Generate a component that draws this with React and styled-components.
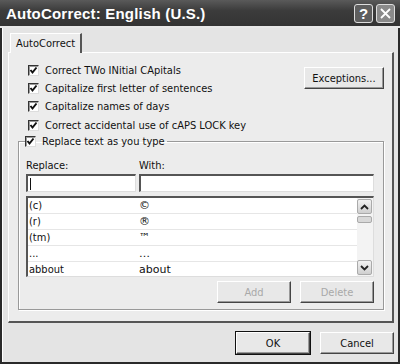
import styled, { createGlobalStyle } from 'styled-components';

const GlobalStyle = createGlobalStyle`
  html, body {
    margin: 0;
    padding: 0;
    background: #e4e4e4;
  }
  body {
    font-family: "DejaVu Sans Condensed", "Liberation Sans", sans-serif;
  }
`;

const Window = styled.div`
  width: 400px;
  height: 364px;
  box-sizing: border-box;
  background: #e4e4e4;
  border: 2px solid #2a2a2a;
  border-top: none;
  display: flex;
  flex-direction: column;
  font-size: 11px;
  color: #111;
`;

const TitleBar = styled.div`
  height: 28px;
  margin: 0 -2px;
  flex-shrink: 0;
  display: flex;
  align-items: center;
  padding: 1px 5px 0 6px;
  background: linear-gradient(#5a5a5a, #3c3c3c 40%, #333 100%);
  border-bottom: 2px solid #e8e8e8;
  box-sizing: border-box;
`;

const Title = styled.div`
  flex: 1;
  color: #fff;
  font-family: "Liberation Sans", Arial, sans-serif;
  font-weight: bold;
  font-size: 15px;
  letter-spacing: 0.2px;
`;

const CaptionButtons = styled.div`
  display: flex;
  gap: 3px;
`;

const CaptionButton = styled.div`
  width: 19px;
  height: 19px;
  box-sizing: border-box;
  border: 1px solid #ddd;
  border-radius: 3px;
  background: ${(p) => (p.$close ? '#8a8a8a' : '#5e5e5e')};
  color: #fff;
  display: flex;
  align-items: center;
  justify-content: center;
  font-family: "Liberation Sans", Arial, sans-serif;
  font-weight: bold;
  font-size: 15px;
`;

const Body = styled.div`
  flex: 1;
  display: flex;
  flex-direction: column;
  padding: 5px 4px 0 5px;
  border-left: 1px solid #fff;
`;

const TabStrip = styled.div`
  display: flex;
  padding-left: 2px;
`;

const Tab = styled.div`
  height: 19px;
  padding: 0 5px;
  display: flex;
  align-items: center;
  background: #ececec;
  border: 1px solid #fff;
  border-right: 2px solid #555;
  border-bottom: none;
  margin-bottom: -1px;
  position: relative;
  z-index: 1;
`;

const Panel = styled.div`
  height: 271px;
  box-sizing: border-box;
  background: #ececec;
  border: 1px solid #fff;
  border-right: 2px solid #555;
  border-bottom: 2px solid #555;
  padding: 8px 8px 11px 9px;
  display: flex;
  flex-direction: column;
`;

const TopArea = styled.div`
  display: grid;
  grid-template-columns: 1fr auto;
  align-items: start;
`;

const Options = styled.div`
  display: flex;
  flex-direction: column;
`;

const CheckRow = styled.label`
  height: 18.3px;
  display: flex;
  align-items: center;
  gap: 6px;
  padding-left: 10px;
  white-space: nowrap;
`;

const Box = styled.span`
  width: 11px;
  height: 11px;
  box-sizing: border-box;
  background: #fff;
  border: 1px solid #333;
  border-right-color: #ddd;
  border-bottom-color: #ddd;
  box-shadow: inset 1px 1px 0 #999;
  display: inline-flex;
  align-items: center;
  justify-content: center;
  flex-shrink: 0;
`;

const Check = () => (
  <Box>
    <svg width="9" height="9" viewBox="0 0 9 9">
      <path d="M1.5 4 L3.5 6.5 L7.5 1.5" fill="none" stroke="#111" strokeWidth="2" />
    </svg>
  </Box>
);

const Button = styled.button`
  width: ${(p) => p.$w || 74}px;
  height: 22px;
  box-sizing: border-box;
  background: #e8e8e8;
  border: 1px solid #fff;
  border-right-color: #444;
  border-bottom-color: #444;
  box-shadow: ${(p) =>
    p.$default
      ? '0 0 0 1px #111, inset -1px -1px 0 #999'
      : 'inset -1px -1px 0 #999'};
  font-family: inherit;
  font-size: 11px;
  color: ${(p) => (p.disabled ? '#a8a8a8' : '#111')};
  padding: 0;
  margin-top: ${(p) => p.$top || 0}px;
`;

const Group = styled.fieldset`
  margin: -2px 0 0 0;
  padding: 0 9px 0 7px;
  border: 1px solid #999;
  box-shadow: 1px 1px 0 #fff, inset 1px 1px 0 #fff;
  flex: 1;
  display: flex;
  flex-direction: column;
  min-width: 0;
`;

const Legend = styled.legend`
  padding: 0 2px 0 0;
  margin-left: -1px;
`;

const LegendRow = styled(CheckRow)`
  padding-left: 0;
`;

const Fields = styled.div`
  display: grid;
  grid-template-columns: 110px 1fr;
  column-gap: 3px;
  margin-top: 9px;
`;

const FieldLabel = styled.div`
  height: 14px;
  margin-bottom: 1px;
`;

const Input = styled.div`
  height: 18px;
  box-sizing: border-box;
  background: #fff;
  border: 2px solid #555;
  border-right: 1px solid #ddd;
  border-bottom: 1px solid #ddd;
  padding: 1px 0 0 2px;
  display: flex;
  align-items: center;
`;

const Caret = styled.span`
  width: 1px;
  height: 12px;
  background: #111;
`;

const List = styled.div`
  margin-top: 4px;
  height: 81px;
  box-sizing: border-box;
  background: #fff;
  border: 2px solid #555;
  border-right: 1px solid #ddd;
  border-bottom: 1px solid #ddd;
  display: flex;
  overflow: hidden;
`;

const Rows = styled.div`
  flex: 1;
  display: flex;
  flex-direction: column;
`;

const Row = styled.div`
  height: 16px;
  flex-shrink: 0;
  box-sizing: border-box;
  border-bottom: 1px solid #e6e6e6;
  display: grid;
  grid-template-columns: 110px 1fr;
  align-items: center;
  padding-left: 1px;
`;

const Symbol = styled.span`
  font-family: "DejaVu Sans", sans-serif;
`;

const ScrollBar = styled.div`
  width: 16px;
  display: flex;
  flex-direction: column;
  background: #f3f3f3;
  padding: 1px 1px 1px 0;
  box-sizing: border-box;
`;

const Arrow = styled.div`
  height: 15px;
  box-sizing: border-box;
  border: 1px solid #aaa;
  border-radius: 2px;
  background: linear-gradient(#f2f2f2, #cfcfcf);
  display: flex;
  align-items: center;
  justify-content: center;
`;

const Thumb = styled.div`
  height: 7px;
  margin-top: 2px;
  box-sizing: border-box;
  border: 1px solid #aaa;
  border-radius: 2px;
  background: #d8d8d8;
`;

const Track = styled.div`
  flex: 1;
`;

const GroupButtons = styled.div`
  display: flex;
  justify-content: flex-end;
  gap: 9px;
  margin: 4px 0 0 0;
`;

const Footer = styled.div`
  display: flex;
  justify-content: flex-end;
  gap: 10px;
  padding: 9px 0 0 0;
`;

const Chevron = ({ up }) => (
  <svg width="9" height="6" viewBox="0 0 9 6">
    <path
      d={up ? 'M1 5 L4.5 1.5 L8 5' : 'M1 1 L4.5 4.5 L8 1'}
      fill="none"
      stroke="#222"
      strokeWidth="1.8"
    />
  </svg>
);

const options = [
  'Correct TWo INitial CApitals',
  'Capitalize first letter of sentences',
  'Capitalize names of days',
  'Correct accidental use of cAPS LOCK key',
];

const entries = [
  ['(c)', '\u00A9\uFE0E'],
  ['(r)', '\u00AE\uFE0E'],
  ['(tm)', '\u2122\uFE0E'],
  ['...', '\u2026'],
  ['abbout', 'about'],
];

export default function App() {
  return (
    <>
      <GlobalStyle />
      <Window>
        <TitleBar>
          <Title>AutoCorrect: English (U.S.)</Title>
          <CaptionButtons>
            <CaptionButton>?</CaptionButton>
            <CaptionButton $close>
              <svg width="11" height="11" viewBox="0 0 11 11">
                <path d="M1 1 L10 10 M10 1 L1 10" stroke="#fff" strokeWidth="1.8" />
              </svg>
            </CaptionButton>
          </CaptionButtons>
        </TitleBar>
        <Body>
          <TabStrip>
            <Tab>AutoCorrect</Tab>
          </TabStrip>
          <Panel>
            <TopArea>
              <Options>
                {options.map((o) => (
                  <CheckRow key={o}>
                    <Check />
                    {o}
                  </CheckRow>
                ))}
              </Options>
              <Button $w={80} $top={6}>
                Exceptions...
              </Button>
            </TopArea>
            <Group>
              <Legend>
                <LegendRow>
                  <Check />
                  Replace text as you type
                </LegendRow>
              </Legend>
              <Fields>
                <FieldLabel>Replace:</FieldLabel>
                <FieldLabel>With:</FieldLabel>
                <Input>
                  <Caret />
                </Input>
                <Input />
              </Fields>
              <List>
                <Rows>
                  {entries.map(([a, b]) => (
                    <Row key={a}>
                      <span>{a}</span>
                      <Symbol>{b}</Symbol>
                    </Row>
                  ))}
                </Rows>
                <ScrollBar>
                  <Arrow>
                    <Chevron up />
                  </Arrow>
                  <Thumb />
                  <Track />
                  <Arrow>
                    <Chevron />
                  </Arrow>
                </ScrollBar>
              </List>
              <GroupButtons>
                <Button disabled>Add</Button>
                <Button disabled>Delete</Button>
              </GroupButtons>
            </Group>
          </Panel>
          <Footer>
            <Button $default>OK</Button>
            <Button>Cancel</Button>
          </Footer>
        </Body>
      </Window>
    </>
  );
}
